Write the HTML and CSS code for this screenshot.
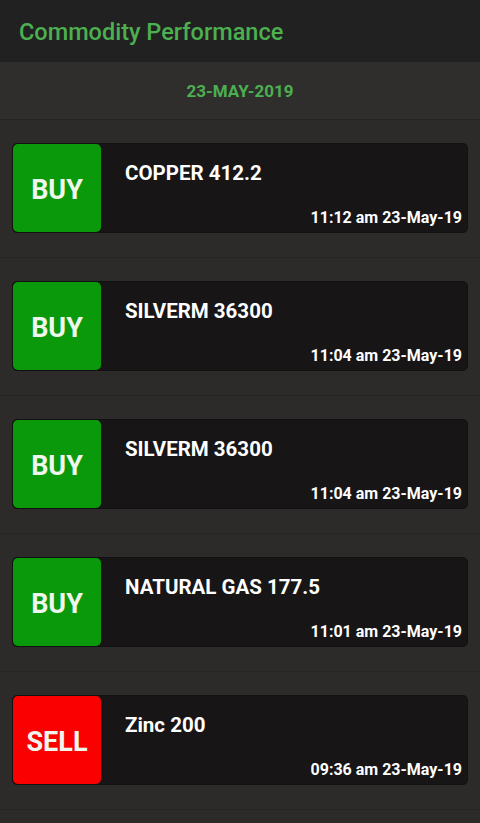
FILE: index.html
```html
<!DOCTYPE html>
<html lang="en">
<head>
  <meta charset="UTF-8">
  <title>Commodity Performance</title>
  <link rel="stylesheet" href="styles.css">
</head>
<body>
  <header class="appbar">Commodity Performance</header>
  <div class="datebar">23-MAY-2019</div>
  <ul class="list">
    <li class="row">
      <div class="card">
        <div class="badge buy">BUY</div>
        <div class="info">
          <div class="name">COPPER 412.2</div>
          <div class="time">11:12 am 23-May-19</div>
        </div>
      </div>
    </li>
    <li class="row">
      <div class="card">
        <div class="badge buy">BUY</div>
        <div class="info">
          <div class="name">SILVERM 36300</div>
          <div class="time">11:04 am 23-May-19</div>
        </div>
      </div>
    </li>
    <li class="row">
      <div class="card">
        <div class="badge buy">BUY</div>
        <div class="info">
          <div class="name">SILVERM 36300</div>
          <div class="time">11:04 am 23-May-19</div>
        </div>
      </div>
    </li>
    <li class="row">
      <div class="card">
        <div class="badge buy">BUY</div>
        <div class="info">
          <div class="name">NATURAL GAS 177.5</div>
          <div class="time">11:01 am 23-May-19</div>
        </div>
      </div>
    </li>
    <li class="row">
      <div class="card">
        <div class="badge sell">SELL</div>
        <div class="info">
          <div class="name">Zinc 200</div>
          <div class="time">09:36 am 23-May-19</div>
        </div>
      </div>
    </li>
  </ul>
</body>
</html>
```

FILE: styles.css
```css
body {
  margin: 0;
  background: #2c2b2a;
  color: #fff;
  font-family: Roboto, 'Liberation Sans', sans-serif;
  height: 823px;
  overflow: hidden;
}
.appbar {
  height: 62px;
  background: #222122;
  color: #4caf50;
  font-size: 23.5px;
  font-weight: 500;
  padding-left: 19px;
  line-height: 64px;
}
.datebar {
  height: 57px;
  background: #2f2e2d;
  border-bottom: 1px solid #262524;
  color: #4caf50;
  font-weight: bold;
  font-size: 17px;
  text-align: center;
  line-height: 58px;
}
.list { list-style: none; margin: 0; padding: 0; }
.row {
  padding: 23px 12px 24px;
  border-bottom: 1px solid #262524;
}
.card {
  display: flex;
  height: 88px;
  background: #171516;
  border: 1px solid #111;
  border-radius: 5px;
}
.badge {
  width: 88px;
  padding-top: 4px;
  box-sizing: border-box;
  border-radius: 5px;
  display: flex;
  align-items: center;
  justify-content: center;
  font-size: 27px;
  font-weight: bold;
  color: #eef6ee;
}
.buy { background: #0a990b; }
.sell { background: #fb0000; }
.info {
  flex: 1;
  display: flex;
  flex-direction: column;
  justify-content: space-between;
  padding: 17px 5px 5px 24px;
}
.name { font-size: 20.5px; font-weight: bold; }
.time { font-size: 16px; font-weight: bold; text-align: right; }
```
